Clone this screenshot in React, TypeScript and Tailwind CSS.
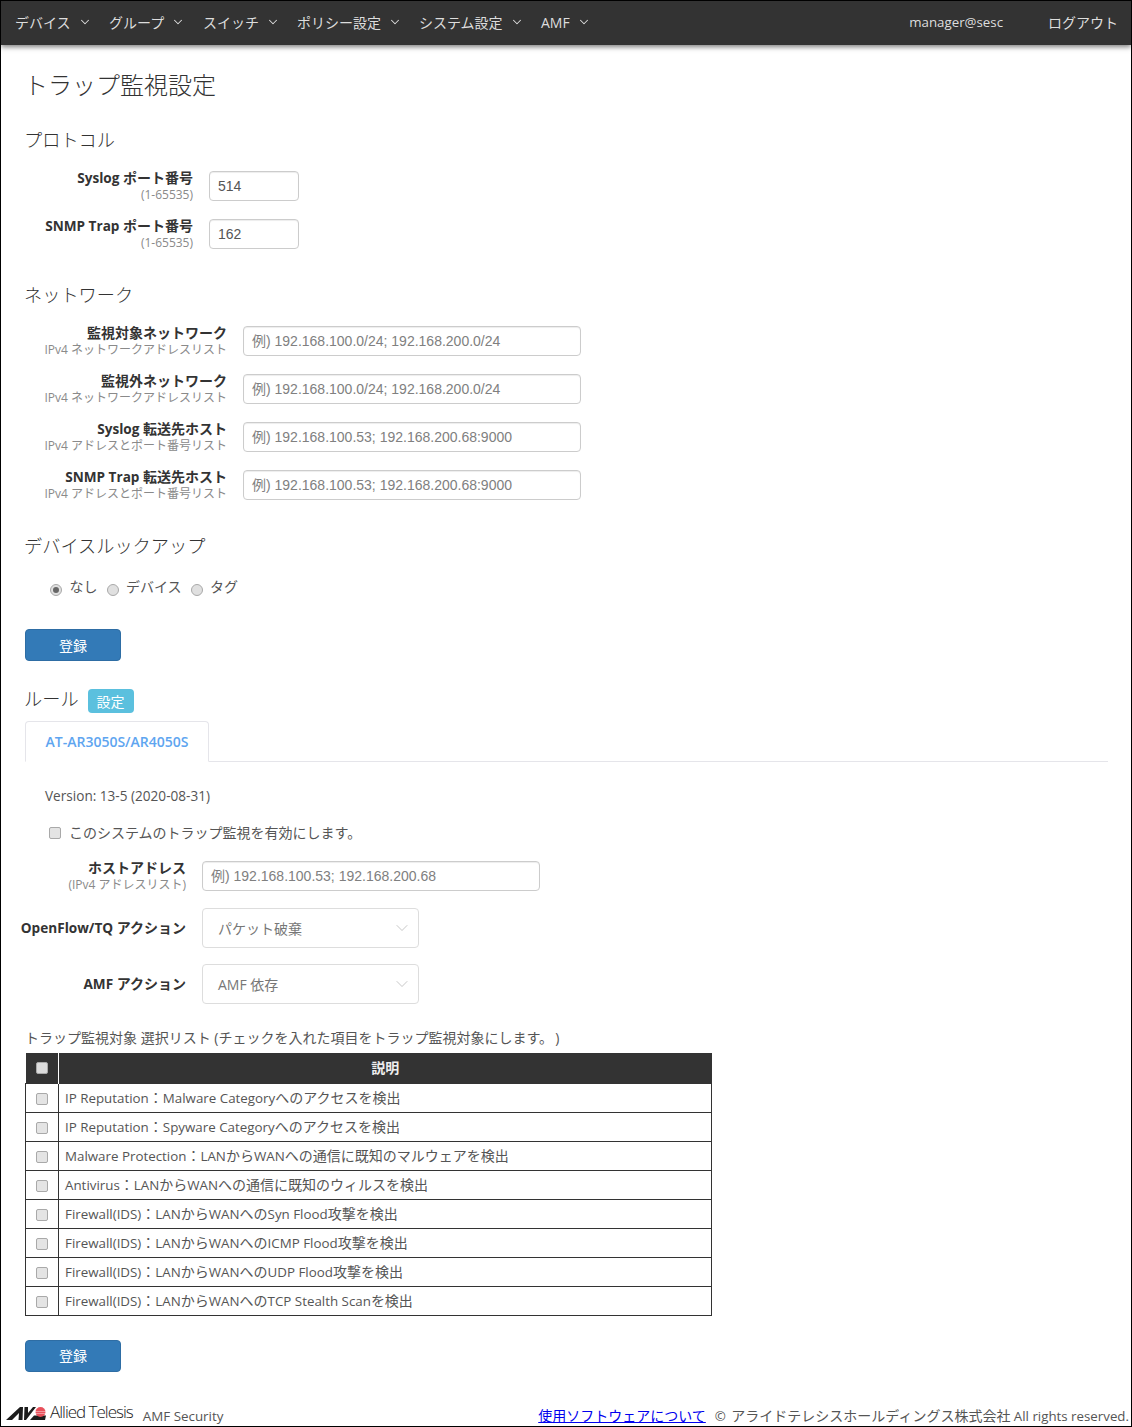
import React from 'react';
import { ChevronDown } from 'lucide-react';

const sans = "font-['Open_Sans','Noto_Sans_CJK_JP',sans-serif]";

const menus = [
  { label: 'デバイス', width: 'w-[94px]' },
  { label: 'グループ', width: 'w-[94px]' },
  { label: 'スイッチ', width: 'w-[94px]' },
  { label: 'ポリシー設定', width: 'w-[122px]' },
  { label: 'システム設定', width: 'w-[122px]' },
  { label: 'AMF', width: 'w-[60px]' },
];

const rules = [
  'IP Reputation：Malware Categoryへのアクセスを検出',
  'IP Reputation：Spyware Categoryへのアクセスを検出',
  'Malware Protection：LANからWANへの通信に既知のマルウェアを検出',
  'Antivirus：LANからWANへの通信に既知のウィルスを検出',
  'Firewall(IDS)：LANからWANへのSyn Flood攻撃を検出',
  'Firewall(IDS)：LANからWANへのICMP Flood攻撃を検出',
  'Firewall(IDS)：LANからWANへのUDP Flood攻撃を検出',
  'Firewall(IDS)：LANからWANへのTCP Stealth Scanを検出',
];

const networks = [
  { label: '監視対象ネットワーク', hint: 'IPv4 ネットワークアドレスリスト', holder: '例) 192.168.100.0/24; 192.168.200.0/24' },
  { label: '監視外ネットワーク', hint: 'IPv4 ネットワークアドレスリスト', holder: '例) 192.168.100.0/24; 192.168.200.0/24' },
  { label: 'Syslog 転送先ホスト', hint: 'IPv4 アドレスとポート番号リスト', holder: '例) 192.168.100.53; 192.168.200.68:9000' },
  { label: 'SNMP Trap 転送先ホスト', hint: 'IPv4 アドレスとポート番号リスト', holder: '例) 192.168.100.53; 192.168.200.68:9000' },
];

// latin runs sit a little smaller than the japanese ones in the original
const Mixed: React.FC<{ text: string; latin: string }> = ({ text, latin }) => (
  <>
    {text.split(/([\u3000-\u9fff\uff00-\uffef]+)/).map((part, i) =>
      i % 2 === 1 ? <span key={i}>{part}</span> : <span key={i} className={latin}>{part}</span>
    )}
  </>
);

const TextBox: React.FC<{ value?: string; holder?: string; width: string }> = ({ value, holder, width }) => (
  <div
    className={`${width} h-[30px] shrink-0 border border-[#ccc] rounded-[4px] pl-[8px] flex items-center text-[14px] font-['Liberation_Sans','Noto_Sans_CJK_JP',sans-serif] shadow-[inset_0_1px_1px_rgba(0,0,0,0.075)] ${value ? 'text-[#555]' : 'text-[#808080]'}`}
  >
    {value || holder}
  </div>
);

const FieldLabel: React.FC<{ label: string; hint?: string; width: string }> = ({ label, hint, width }) => (
  <div className={`${width} shrink-0 text-right -my-[3px] pt-[2px]`}>
    <div className="text-[14px] leading-[16px] font-bold text-[#333]">
      <Mixed text={label} latin="text-[13.6px]" />
    </div>
    <div className="text-[12px] leading-[18px] text-[#8a8a8a]">{hint}</div>
  </div>
);

const Heading: React.FC<{ children: React.ReactNode }> = ({ children }) => (
  <h3 className="text-[18.2px] leading-[24px] font-light text-[#333] pl-[23px]">{children}</h3>
);

const SelectBox: React.FC<{ label: string; value: string }> = ({ label, value }) => (
  <div className="flex items-center gap-[16px]">
    <div className="w-[185px] shrink-0 text-right text-[14px] font-bold text-[#333]">
      <Mixed text={label} latin="text-[13.6px]" />
    </div>
    <div className="w-[217px] h-[40px] border border-[#ddd] rounded-[4px] pl-[15px] pr-[6px] flex items-center justify-between text-[14px] text-[#777]">
      <span>{value}</span>
      <ChevronDown size={20} strokeWidth={0.8} className="text-[#aaa]" />
    </div>
  </div>
);

const Radio: React.FC<{ checked?: boolean; label: string }> = ({ checked, label }) => (
  <span className="flex items-center gap-[7.5px]">
    <span className="w-[12px] h-[12px] mt-[6px] rounded-full bg-[#e0e0e0] border border-[#a9a9a9] flex items-center justify-center">
      {checked && <span className="w-[6px] h-[6px] rounded-full bg-[#666]" />}
    </span>
    <span className="text-[14px] leading-[20px] text-[#555]">{label}</span>
  </span>
);

const Check: React.FC<{ light?: boolean }> = ({ light }) => (
  <span className={`block w-[12px] h-[12px] rounded-[2px] border border-[#a9a9a9] ${light ? 'bg-[#dcdcdc]' : 'bg-[#e4e4e4]'}`} />
);

const SubmitButton: React.FC = () => (
  <button className="block w-[96px] h-[32px] bg-[#337ab7] border border-[#2e6da4] rounded-[4px] text-white text-[14px]">
    登録
  </button>
);

const Logo: React.FC = () => (
  <svg width="40" height="13" viewBox="0 0 40 13" className="shrink-0 mb-[5px]">
    <path d="M0 13 L14 0 H17 L16.5 13 H12.5 L13 6 L6 13 Z" fill="#1c1c1c" />
    <path d="M18.5 0 H22 L22 6 L27 0 H30 L20 13 H18 Z" fill="#1c1c1c" />
    <path d="M24 13 L28 8.5 H40 L39 13 Z" fill="#1c1c1c" />
    <circle cx="34.5" cy="5" r="5" fill="#e8505b" />
    <path d="M29 4.5 H40 M29 6.5 H40" stroke="#fff" strokeWidth="0.4" />
  </svg>
);

const App: React.FC = () => {
  return (
    <div className={`${sans} w-[1132px] h-[1427px] bg-white border border-black overflow-hidden`}>
      <nav className="h-[44px] pb-[2px] bg-[#333] shadow-[0_2px_5px_rgba(0,0,0,0.5)] flex items-center text-[#ddd] pl-[14px] pr-[13px]">
        {menus.map((m) => (
          <div key={m.label} className={`${m.width} flex items-center gap-[7px] text-[14px]`}>
            <span>{m.label}</span>
            <ChevronDown size={14} strokeWidth={1.8} />
          </div>
        ))}
        <div className="ml-auto mt-[1px] text-[13.3px]">manager@sesc</div>
        <div className="ml-[45px] text-[14px]">ログアウト</div>
      </nav>

      <h2 className="mt-[23px] pl-[23px] text-[24px] leading-[33px] font-light text-[#333]">トラップ監視設定</h2>

      <div className="mt-[27px]">
        <Heading>プロトコル</Heading>
      </div>
      <div className="mt-[19px] flex flex-col gap-[18px] pl-[24px]">
        <div className="flex items-center gap-[16px] h-[30px]">
          <FieldLabel width="w-[168px]" label="Syslog ポート番号" hint="(1-65535)" />
          <TextBox width="w-[90px]" value="514" />
        </div>
        <div className="flex items-center gap-[16px] h-[30px]">
          <FieldLabel width="w-[168px]" label="SNMP Trap ポート番号" hint="(1-65535)" />
          <TextBox width="w-[90px]" value="162" />
        </div>
      </div>

      <div className="mt-[34px]">
        <Heading>ネットワーク</Heading>
      </div>
      <div className="mt-[19px] flex flex-col gap-[18px] pl-[24px]">
        {networks.map((n) => (
          <div key={n.label} className="flex items-center gap-[16px] h-[30px]">
            <FieldLabel width="w-[202px]" label={n.label} hint={n.hint} />
            <TextBox width="w-[338px]" holder={n.holder} />
          </div>
        ))}
      </div>

      <div className="mt-[34px]">
        <Heading>デバイスルックアップ</Heading>
      </div>
      <div className="mt-[19px] pl-[49px] flex items-center gap-[9px]">
        <Radio checked label="なし" />
        <Radio label="デバイス" />
        <Radio label="タグ" />
      </div>

      <div className="mt-[32px] pl-[24px]">
        <SubmitButton />
      </div>

      <div className="mt-[28px] pl-[23px] flex items-center gap-[9px] h-[24px]">
        <h3 className="-mt-[4px] text-[18.2px] leading-[24px] font-light text-[#333]">ルール</h3>
        <span className="w-[46px] h-[24px] bg-[#5bc0de] rounded-[4px] text-white text-[14px] flex items-center justify-center">設定</span>
      </div>

      <div className="mt-[8px] ml-[24px] w-[1083px] h-[41px] border-b border-[#e5e5ea]">
        <div className="w-[184px] h-[41px] border border-[#e5e5ea] border-b-white rounded-t-[4px] bg-white flex items-center justify-center text-[14px] font-semibold text-[#5ea5f0]">
          AT-AR3050S/AR4050S
        </div>
      </div>

      <div className="mt-[25px] pl-[44px] text-[13.6px] leading-[18px] text-[#555]">Version: 13-5 (2020-08-31)</div>

      <div className="mt-[17px] pl-[48px] flex items-center gap-[8px] h-[20px]">
        <span className="pt-[2px]"><Check /></span>
        <span className="text-[14px] text-[#555]">このシステムのトラップ監視を有効にします。</span>
      </div>

      <div className="mt-[19px] flex items-center gap-[16px] h-[30px]">
        <FieldLabel width="w-[185px]" label="ホストアドレス" hint="(IPv4 アドレスリスト)" />
        <TextBox width="w-[338px]" holder="例) 192.168.100.53; 192.168.200.68" />
      </div>

      <div className="mt-[17px] flex flex-col gap-[16px]">
        <SelectBox label="OpenFlow/TQ アクション" value="パケット破棄" />
        <SelectBox label="AMF アクション" value="AMF 依存" />
      </div>

      <div className="mt-[24px] pl-[24px] text-[14px] leading-[20px] text-[#555]">
        トラップ監視対象 選択リスト (チェックを入れた項目をトラップ監視対象にします。{'\u2009'})
      </div>

      <table className="mt-[5px] ml-[24px] w-[687px] border-collapse text-[14px] text-[#555]">
        <thead>
          <tr className="h-[30px] bg-[#333] text-white">
            <th className="w-[33px] border-r border-white">
              <span className="flex justify-center"><Check light /></span>
            </th>
            <th className="text-[14px] font-bold text-[#eee]">説明</th>
          </tr>
        </thead>
        <tbody>
          {rules.map((r) => (
            <tr key={r} className="h-[29px]">
              <td className="border border-[#333]">
                <span className="flex justify-center pt-[2px]"><Check /></span>
              </td>
              <td className="border border-[#333] pl-[6px]">
                <Mixed text={r} latin="text-[13.35px]" />
              </td>
            </tr>
          ))}
        </tbody>
      </table>

      <div className="mt-[24px] pl-[24px]">
        <SubmitButton />
      </div>

      <footer className="mt-[33px] pl-[5px] pr-[2px] flex items-end h-[20px]">
        <Logo />
        <span className="ml-[4px] mb-[3px] text-[17px] leading-[20px] tracking-[-1px] font-light text-[#222]">Allied Telesis</span>
        <span className="ml-[10px] text-[13.4px] leading-[18px] text-[#555]">AMF Security</span>
        <span className="ml-auto text-[14px] leading-[18px] text-[#555]">
          <a className="text-[#0000ee] underline">使用ソフトウェアについて</a>
          <span className="ml-[9px]">
            <span className="mr-[2px] text-[13.3px]">©</span>
            <Mixed text=" アライドテレシスホールディングス株式会社 All rights reserved." latin="text-[13.3px]" />
          </span>
        </span>
      </footer>
    </div>
  );
};

export default App;
